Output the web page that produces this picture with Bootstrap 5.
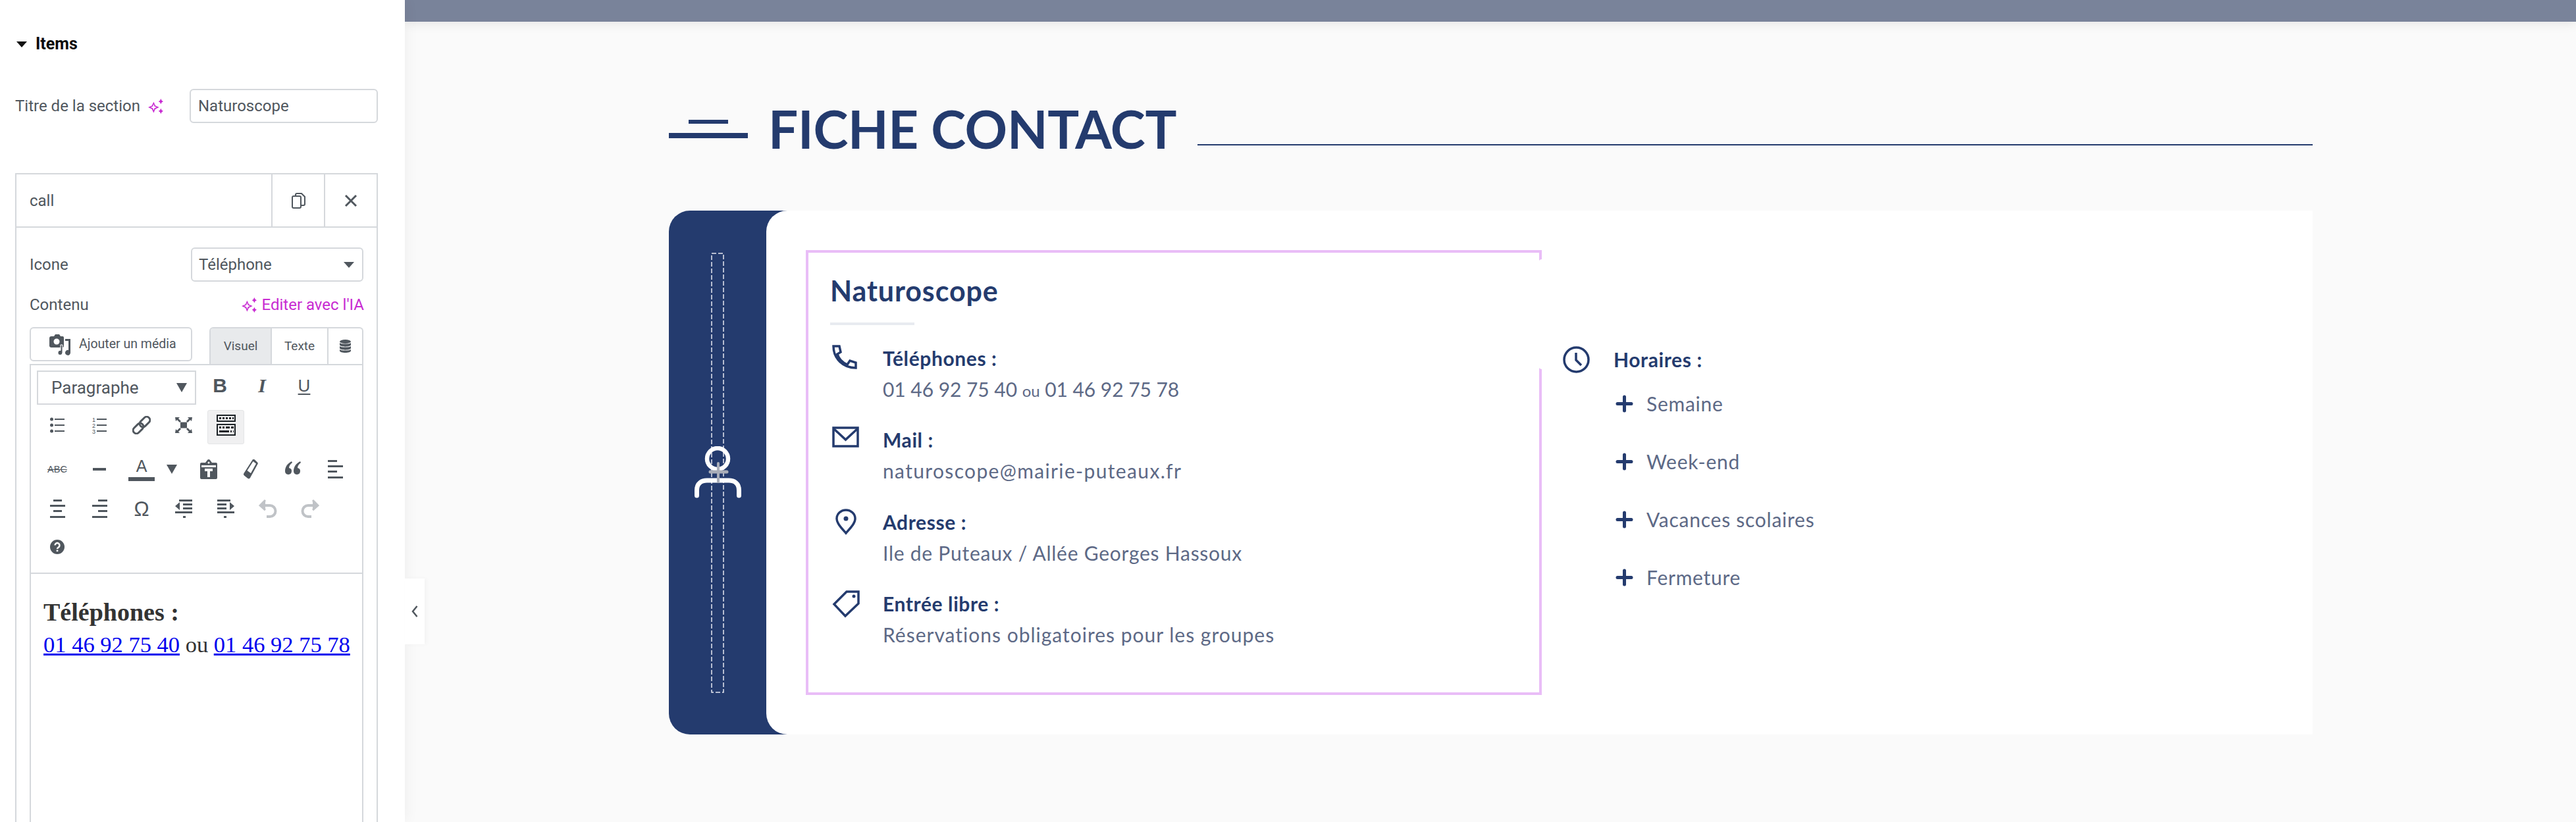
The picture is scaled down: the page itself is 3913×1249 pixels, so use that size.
<!DOCTYPE html>
<html lang="fr">
<head>
<meta charset="UTF-8">
<title>Fiche contact</title>
<link href="https://cdn.jsdelivr.net/npm/bootstrap@5.3.0/dist/css/bootstrap.min.css" rel="stylesheet">
<style>
  html, body { height: 1249px; overflow: hidden; }
  body { background: #fafafa; font-family: "Roboto", "Liberation Sans", sans-serif; color: #50575e; }
  svg { display: block; flex: none; }

  /* left panel */
  .side-panel { width: 615px; height: 1249px; flex: none; background: #fff; padding: 50px 41px 0 23px; overflow: hidden; box-shadow: 0 0 22px rgba(0,0,0,.06); position: relative; z-index: 2; }
  .items-head { height: 34px; color: #0b0b0b; font-size: 25px; font-weight: 700; gap: 13px; padding-left: 2px; }
  .tri-down { width: 0; height: 0; border-left: 8px solid transparent; border-right: 8px solid transparent; border-top: 9px solid #111; }
  .title-row { height: 52px; margin-top: 51px; font-size: 24px; }
  .title-row label { width: 265px; gap: 12px; white-space: nowrap; }
  .side-input { width: 286px; height: 52px; border: 2px solid #d5d8dc; border-radius: 6px; padding: 0 11px; font-size: 24px; color: #50575e; }
  .item-box { height: 1040px; margin-top: 76px; border: 2px solid #d5d8dc; font-size: 24px; }
  .item-top { height: 81px; border-bottom: 2px solid #d5d8dc; }
  .item-top .item-name { padding-left: 20px; }
  .item-top .item-act { width: 80px; height: 100%; border-left: 2px solid #d5d8dc; }
  .item-body { padding: 30px 20px 0; }
  .side-select { width: 262px; height: 52px; border: 2px solid #d5d8dc; border-radius: 6px; padding: 0 10px; font-size: 24px; color: #50575e; background-size: 16px 9px; background-position: right 12px center; background-image: url("data:image/svg+xml,%3csvg xmlns='http://www.w3.org/2000/svg' viewBox='0 0 16 9'%3e%3cpath fill='%2350575e' d='M0 0h16L8 9z'/%3e%3c/svg%3e"); }
  .content-row { height: 30px; margin-top: 20px; }
  .ia-link { color: #c82bd2; gap: 8px; margin-right: -1px; }
  .media-row { margin-top: 19px; }
  .media-btn { width: 247px; height: 52px; border: 2px solid #d5d8dc; border-radius: 6px; font-size: 19.5px; color: #50575e; gap: 12px; padding: 0 0 0 28px; background: #fff; white-space: nowrap; }
  .mode-tabs { width: 234px; height: 56px; border: 2px solid #d5d8dc; border-bottom: 0; border-radius: 6px 6px 0 0; overflow: hidden; font-size: 19px; }
  .mode-tabs > div { height: 100%; }
  .mode-tabs .tab-on { width: 91px; background: #e8eaec; }
  .mode-tabs .tab-off { width: 86px; border-left: 2px solid #d5d8dc; }
  .mode-tabs .tab-db { flex: 1; border-left: 2px solid #d5d8dc; }
  .editor-box { height: 800px; border: 2px solid #d5d8dc; }
  .tool-zone { height: 317px; border-bottom: 2px solid #d5d8dc; padding: 8px 0 0 8px; }
  .tool-row { display: flex; height: 52px; margin-bottom: 8px; }
  .tool-row.r3 { margin-top: 12px; }
  .tool-row.r5 { margin-top: -2px; }
  .para-select { width: 242px; height: 52px; border: 2px solid #d5d8dc; padding: 0 12px 0 20px; font-size: 26px; margin: 0 4px 0 1px; }
  .tool-cell { width: 64px; height: 52px; color: #50575e; }
  .tool-cell.lift { padding-bottom: 6px; }
  .tool-cell.caret-cell { width: 28px; }
  .tool-cell.after-caret { margin-left: 10px; }
  .tool-on { width: 56px; margin: 0 4px; background: #f0f0f1; border: 1px solid #e4e5e7; border-radius: 3px; }
  .tb-b { font: 700 30px/1 "Liberation Sans", sans-serif; }
  .tb-i { font: italic 700 30px/1 "Liberation Serif", serif; }
  .tb-u { font: 400 26px/1 "Liberation Sans", sans-serif; text-decoration: underline; text-underline-offset: 3px; }
  .tb-a { font: 400 25px/1 "Liberation Sans", sans-serif; border-bottom: 6px solid #50575e; width: 40px; text-align: center; padding-bottom: 4px; }
  .tb-abc { font: 400 14.5px/1 "Liberation Sans", sans-serif; text-decoration: line-through; }
  .tb-om { font: 400 31px/1 "Liberation Sans", sans-serif; }
  .tri-small { width: 0; height: 0; border-left: 8px solid transparent; border-right: 8px solid transparent; border-top: 14px solid #50575e; }
  .edit-text { padding: 36px 20px 0 19px; font-family: "Liberation Serif", serif; color: #333; }
  .edit-text h4 { font: 700 38px/44px "Liberation Serif", serif; margin: 0; color: #333; }
  .edit-text p { font-size: 34.5px; line-height: 42px; margin: 6px 0 0; white-space: nowrap; }
  .edit-text a { color: #0000ee; }
  .fold-tab { width: 30px; height: 100px; background: #fff; box-shadow: 3px 0 6px rgba(0,0,0,.03); position: absolute; left: 615px; top: 879px; z-index: 3; }

  /* preview */
  .preview { flex: 1; min-width: 0; font-family: "Lato", "Noto Sans", sans-serif; color: #5d6986; }
  .top-strip { height: 33px; background: #79839a; box-shadow: 0 4px 16px rgba(0,0,0,.08); }
  .preview-wrap { width: 2497px; margin-left: 401px; }
  .head-row { height: 90px; margin-top: 120px; }
  .head-bars { width: 120px; flex: none; margin-right: 31px; padding-top: 29px; }
  .head-bars .bar-a { width: 60px; height: 6px; margin: 0 auto 14px; background: #243b6e; }
  .head-bars .bar-b { height: 8px; background: #243b6e; }
  .head-row h1 { font: 700 80px/90px "Lato", sans-serif; color: #243b6e; margin: -3px 0 0; white-space: nowrap; letter-spacing: -.3px; }
  .head-line { flex: 1; height: 2px; background: #243b6e; margin-left: 32px; margin-top: 66px; }
  .sheet { margin-top: 77px; height: 796px; background: #243b6e; border-radius: 32px 0 0 32px; }
  .sheet-bar { width: 148px; flex: none; position: relative; padding-top: 64px; padding-left: 64px; }
  .drag-person { position: absolute; left: 39px; top: 358px; }
  .sheet-main { flex: 1; background: #fff; border-radius: 32px 0 0 32px; padding: 60px 0 0 60px; }
  .pink-box { width: 1118px; height: 676px; border: 4px solid #e9bdf7; padding: 33px 0 0 33px; position: relative; flex: none; }
  .pink-gap { position: absolute; right: -4px; top: 10px; width: 5px; height: 167px; background: #fff; border-radius: 5px 0 0 5px; }
  .pink-box h3 { font: 700 43px/50px "Lato", sans-serif; color: #243b6e; margin: 0; letter-spacing: .9px; }
  .short-rule { width: 128px; height: 4px; background: #e8ebf0; margin-top: 23px; margin-bottom: 30px; }
  .info-row { height: 124.3px; }
  .info-icon { width: 80px; flex: none; padding-left: 3px; }
  .info-label { font: 700 30px/40px "Lato", sans-serif; color: #243b6e; letter-spacing: .6px; }
  .info-value { font: 400 30px/40px "Lato", sans-serif; margin-top: 7px; letter-spacing: .75px; white-space: nowrap; }
  .info-value small { font-size: 24px; }
  .info-value.tight { letter-spacing: -.05px; }
  .info-value.wide { letter-spacing: 1.35px; }
  .info-value.wider { letter-spacing: 1px; }
  .hours-col { margin-left: 32px; padding-top: 146px; }
  .hours-icon { width: 77px; flex: none; }
  .hours-row { height: 40px; margin-top: 48px; padding-left: 80px; gap: 20px; font-size: 30px; letter-spacing: .75px; }
  .hours-row.first { margin-top: 26px; }
</style>
</head>
<body>
<div class="d-flex">
  <!-- left panel -->
  <div class="side-panel">
    <div class="items-head d-flex align-items-center"><span class="tri-down"></span><span>Items</span></div>

    <div class="title-row d-flex align-items-center">
      <label class="d-flex align-items-center">Titre de la section
        <svg width="23" height="23" viewBox="0 0 22 22" fill="#c82bd2"><path d="M8 4.500 10.500 10 16 12.500 10.500 15 8 20.500 5.500 15 0 12.500 5.500 10Z M8 8 6.800 11.300 3.500 12.500 6.800 13.700 8 17 9.200 13.700 12.500 12.500 9.200 11.300Z" fill-rule="evenodd"/><path d="M18.500 0 19.800 2.700 22 4 19.800 5.300 18.500 8 17.200 5.300 15 4 17.200 2.700Z M18.500 14 19.800 16.700 22 18 19.800 19.300 18.500 22 17.200 19.300 15 18 17.200 16.700Z"/></svg>
      </label>
      <input class="side-input" type="text" value="Naturoscope">
    </div>

    <div class="item-box">
      <div class="item-top d-flex align-items-center">
        <div class="item-name flex-grow-1">call</div>
        <div class="item-act d-flex align-items-center justify-content-center">
          <svg width="21" height="24" viewBox="0 0 21 24" fill="none" stroke="#50575e" stroke-width="2"><path d="M6 5V3a2 2 0 0 1 2-2h7l5 5v11a2 2 0 0 1-2 2h-4"/><rect x="1" y="5" width="13" height="18" rx="2"/></svg>
        </div>
        <div class="item-act d-flex align-items-center justify-content-center">
          <svg width="20" height="20" viewBox="0 0 20 20" stroke="#50575e" stroke-width="3"><path d="M2 2l16 16M18 2 2 18"/></svg>
        </div>
      </div>
      <div class="item-body">
        <div class="d-flex align-items-center justify-content-between">
          <span>Icone</span>
          <select class="form-select side-select"><option>Téléphone</option></select>
        </div>
        <div class="content-row d-flex align-items-center justify-content-between">
          <span>Contenu</span>
          <span class="ia-link d-flex align-items-center">
            <svg width="23" height="23" viewBox="0 0 22 22" fill="#c82bd2"><path d="M8 4.500 10.500 10 16 12.500 10.500 15 8 20.500 5.500 15 0 12.500 5.500 10Z M8 8 6.800 11.300 3.500 12.500 6.800 13.700 8 17 9.200 13.700 12.500 12.500 9.200 11.300Z" fill-rule="evenodd"/><path d="M18.500 0 19.800 2.700 22 4 19.800 5.300 18.500 8 17.200 5.300 15 4 17.200 2.700Z M18.500 14 19.800 16.700 22 18 19.800 19.300 18.500 22 17.200 19.300 15 18 17.200 16.700Z"/></svg>
            Editer avec l'IA
          </span>
        </div>
        <div class="media-row d-flex justify-content-between align-items-start">
          <button class="media-btn d-flex align-items-center" type="button">
            <svg width="33" height="33" viewBox="0 0 33 33" fill="#50575e"><path d="M3 4h4l2-3h6l2 3h3a2 2 0 0 1 2 2v13a2 2 0 0 1-2 2H3a3 3 0 0 1-3-2V7a3 3 0 0 1 3-3Z"/><circle cx="11" cy="12" r="4.500" fill="#fff"/><path d="M24 8h8v21a4 4 0 1 1-3-4V11h-5Z"/><path d="M17 17h3v12a3.500 3.500 0 1 1-3-3.500Z" stroke="#fff" stroke-width="1"/></svg>
            Ajouter un média
          </button>
          <div class="mode-tabs d-flex">
            <div class="tab-on d-flex align-items-center justify-content-center">Visuel</div>
            <div class="tab-off d-flex align-items-center justify-content-center">Texte</div>
            <div class="tab-db d-flex align-items-center justify-content-center">
              <svg width="17" height="20" viewBox="0 0 17 20" fill="#50575e"><ellipse cx="8.500" cy="3" rx="8.500" ry="3"/><path d="M0 5c2 2 15 2 17 0v3c0 3.500-17 3.500-17 0ZM0 10c2 2 15 2 17 0v3c0 3.500-17 3.500-17 0ZM0 15c2 2 15 2 17 0v2c0 4-17 4-17 0Z"/></svg>
            </div>
          </div>
        </div>
        <div class="editor-box">
          <div class="tool-zone">
            <div class="tool-row">
              <div class="para-select d-flex align-items-center justify-content-between"><span>Paragraphe</span><span class="tri-small"></span></div>
              <div class="tool-cell lift d-flex align-items-center justify-content-center"><span class="tb-b">B</span></div>
              <div class="tool-cell lift d-flex align-items-center justify-content-center"><span class="tb-i">I</span></div>
              <div class="tool-cell lift d-flex align-items-center justify-content-center"><span class="tb-u">U</span></div>
            </div>
            <div class="tool-row">
              <div class="tool-cell lift d-flex align-items-center justify-content-center">
                <svg width="22" height="24" viewBox="0 0 22 24" fill="#50575e"><circle cx="2.500" cy="3" r="2.500"/><circle cx="2.500" cy="12" r="2.500"/><circle cx="2.500" cy="21" r="2.500"/><path d="M7 2h15v2H7zM7 11h15v2H7zM7 20h15v2H7z"/></svg>
              </div>
              <div class="tool-cell lift d-flex align-items-center justify-content-center">
                <svg width="22" height="26" viewBox="0 0 22 26" fill="#50575e"><text x="0" y="8" font-size="9" font-family="Liberation Sans">1</text><text x="0" y="17" font-size="9" font-family="Liberation Sans">2</text><text x="0" y="26" font-size="9" font-family="Liberation Sans">3</text><path d="M7 3h15v2H7zM7 12h15v2H7zM7 21h15v2H7z"/></svg>
              </div>
              <div class="tool-cell lift d-flex align-items-center justify-content-center">
                <svg width="28" height="28" viewBox="0 0 28 28" fill="none" stroke="#50575e" stroke-width="3"><g transform="rotate(-45 14 14)"><rect x="-2" y="9" width="18" height="10" rx="5"/><rect x="12" y="9" width="18" height="10" rx="5"/></g></svg>
              </div>
              <div class="tool-cell lift d-flex align-items-center justify-content-center">
                <svg width="26" height="24" viewBox="0 0 26 24" fill="#50575e"><rect x="8" y="7.500" width="10" height="9"/><path d="M0 0h7L5 2l4 4-2 2-4-4-2 2ZM26 0h-7l2 2-4 4 2 2 4-4 2 2ZM0 24h7l-2-2 4-4-2-2-4 4-2-2ZM26 24h-7l2-2-4-4 2-2 4 4 2-2Z"/></svg>
              </div>
              <div class="tool-cell tool-on lift d-flex align-items-center justify-content-center">
                <svg width="29" height="32" viewBox="0 0 29 32"><path fill="#1d2327" d="M0 0h29v11H0zM0 14h29v18H0z"/><path fill="#f0f0f1" d="M2 2h25v7H2zM2 16h25v14H2z"/><path fill="#1d2327" d="M4 4h3v3H4zM9 4h3v3H9zM14 4h3v3h-3zM19 4h3v3h-3zM24 4h2v3h-2zM4 18h3v3H4zM9 18h3v3H9zM14 18h6v3h-6zM22 18h4v3h-4zM4 24h15v3H4zM21 24h2v3h-2zM25 24h1v3h-1z"/></svg>
              </div>
            </div>
            <div class="tool-row r3">
              <div class="tool-cell d-flex align-items-center justify-content-center"><span class="tb-abc">ABC</span></div>
              <div class="tool-cell d-flex align-items-center justify-content-center"><svg width="20" height="4"><rect width="20" height="4" fill="#50575e"/></svg></div>
              <div class="tool-cell d-flex align-items-center justify-content-center"><span class="tb-a">A</span></div>
              <div class="tool-cell caret-cell d-flex align-items-center justify-content-center"><span class="tri-small"></span></div>
              <div class="tool-cell after-caret d-flex align-items-center justify-content-center">
                <svg width="26" height="30" viewBox="0 0 26 30" fill="#50575e"><path d="M2 5h6l3-4a2.500 2.500 0 0 1 4 0l3 4h6a2 2 0 0 1 2 2v21a2 2 0 0 1-2 2H2a2 2 0 0 1-2-2V7a2 2 0 0 1 2-2Z"/><circle cx="13" cy="5" r="1.500" fill="#fff"/><path fill="#fff" d="M2 9h22v3H2zM7 14h12v4h-4v9h-4v-9H7z"/></svg>
              </div>
              <div class="tool-cell d-flex align-items-center justify-content-center">
                <svg width="22" height="30" viewBox="0 0 22 30"><path fill="#50575e" d="M14 0a3 3 0 0 1 3 .5l4 4a2 2 0 0 1 .500 2.500L10 28a2.500 2.500 0 0 1-3.500 1l-5-4A3 3 0 0 1 .500 21Z"/><path fill="#fff" d="M14.500 3 19 6.500 11 21 5.500 17Z"/></svg>
              </div>
              <div class="tool-cell d-flex align-items-center justify-content-center">
                <svg width="24" height="24" viewBox="0 0 24 24" fill="#50575e"><path d="M10 0C4 3 0 8 0 15a5 5 0 1 0 6-5c0-3 2-6 5-8ZM23 0c-6 3-10 8-10 15a5 5 0 1 0 6-5c0-3 2-6 5-8Z"/></svg>
              </div>
              <div class="tool-cell d-flex align-items-center justify-content-center">
                <svg width="23" height="28" viewBox="0 0 23 28" fill="#50575e"><path d="M0 0h14v3H0zM0 8h23v3H0zM0 16h14v3H0zM0 25h23v3H0z"/></svg>
              </div>
            </div>
            <div class="tool-row">
              <div class="tool-cell d-flex align-items-center justify-content-center">
                <svg width="23" height="28" viewBox="0 0 23 28" fill="#50575e"><path d="M5 0h13v3H5zM0 8h23v3H0zM5 16h13v3H5zM0 25h23v3H0z"/></svg>
              </div>
              <div class="tool-cell d-flex align-items-center justify-content-center">
                <svg width="23" height="28" viewBox="0 0 23 28" fill="#50575e"><path d="M9 0h14v3H9zM0 8h23v3H0zM9 16h14v3H9zM0 25h23v3H0z"/></svg>
              </div>
              <div class="tool-cell d-flex align-items-center justify-content-center"><span class="tb-om">Ω</span></div>
              <div class="tool-cell d-flex align-items-center justify-content-center">
                <svg width="26" height="28" viewBox="0 0 26 28" fill="#50575e"><path d="M6 0h20v3H6zM12 6h14v3H12zM12 12h14v3H12zM0 18h26v3H0zM12 25h4v3h-4zM0 10l7-6v12z"/></svg>
              </div>
              <div class="tool-cell d-flex align-items-center justify-content-center">
                <svg width="26" height="28" viewBox="0 0 26 28" fill="#50575e"><path d="M0 0h20v3H0zM0 6h14v3H0zM0 12h14v3H0zM0 18h26v3H0zM10 25h4v3h-4zM26 10l-7-6v12z"/></svg>
              </div>
              <div class="tool-cell d-flex align-items-center justify-content-center">
                <svg width="28" height="28" viewBox="0 0 28 28" fill="none" stroke="#c0c3c7" stroke-width="4"><path d="M8 9h9a8.500 8.500 0 0 1 0 17h-5"/><path d="M10 1 2 9l8 7" stroke-width="3" fill="#c0c3c7"/></svg>
              </div>
              <div class="tool-cell d-flex align-items-center justify-content-center">
                <svg width="28" height="28" viewBox="0 0 28 28" fill="none" stroke="#c0c3c7" stroke-width="4"><path d="M20 9h-9a8.500 8.500 0 0 0 0 17h5"/><path d="M18 1l8 8-8 7" stroke-width="3" fill="#c0c3c7"/></svg>
              </div>
            </div>
            <div class="tool-row r5">
              <div class="tool-cell d-flex align-items-center justify-content-center">
                <svg width="22" height="22" viewBox="0 0 22 22"><circle cx="11" cy="11" r="11" fill="#50575e"/><path d="M7.500 8.500a3.500 3.500 0 1 1 5.500 3c-1.300 1-2 1.300-2 2.500" fill="none" stroke="#fff" stroke-width="2.500"/><rect x="9.700" y="15.500" width="2.600" height="2.600" fill="#fff"/></svg>
              </div>
            </div>
          </div>
          <div class="edit-text">
            <h4>Téléphones :</h4>
            <p><a href="#">01 46 92 75 40</a> ou <a href="#">01 46 92 75 78</a></p>
          </div>
        </div>
      </div>
    </div>
  </div>

  <div class="fold-tab d-flex align-items-center justify-content-center">
    <svg width="10" height="18" viewBox="0 0 10 18" fill="none" stroke="#50575e" stroke-width="2.500"><path d="M8.500 1 2 9l6.500 8"/></svg>
  </div>

  <!-- preview -->
  <div class="preview">
    <div class="top-strip"></div>
    <div class="preview-wrap">
      <div class="head-row d-flex align-items-start">
        <div class="head-bars"><div class="bar-a"></div><div class="bar-b"></div></div>
        <h1>FICHE CONTACT</h1>
        <div class="head-line"></div>
      </div>

      <div class="sheet d-flex">
        <div class="sheet-bar">
          <svg width="20" height="669" viewBox="0 0 20 669" fill="none"><rect x="1" y="1" width="18" height="667" stroke="#e6e9f1" stroke-width="1.500" stroke-dasharray="7 3"/></svg>
          <svg class="drag-person" width="71" height="80" viewBox="0 0 71 80" fill="none">
            <circle cx="35" cy="19" r="16" stroke="#fff" stroke-width="6.500"/>
            <path d="M3.500 75V67C3.500 56 11 52 19 52H52C60 52 67.500 56 67.500 67V75" stroke="#fff" stroke-width="7" stroke-linecap="round"/>
            <path d="M24 39H49" stroke="#a9adb8" stroke-width="5" stroke-linecap="round"/>
            <path d="M36 26V54" stroke="#a9adb8" stroke-width="4" stroke-linecap="round"/>
          </svg>
        </div>
        <div class="sheet-main d-flex align-items-start">
          <div class="pink-box">
            <div class="pink-gap"></div>
            <h3>Naturoscope</h3>
            <div class="short-rule"></div>
            <div class="info-row d-flex">
              <div class="info-icon">
                <svg width="38" height="37" viewBox="0 0 38 37" fill="none" stroke="#243b6e" stroke-width="3.500"><path d="M2 2h9l2 9-5 3c2 7 8 13 15 16l4-6 9 3v8C17 35 2 21 2 2Z"/></svg>
              </div>
              <div><div class="info-label">Téléphones :</div><div class="info-value tight">01 46 92 75 40 <small>ou</small> 01 46 92 75 78</div></div>
            </div>
            <div class="info-row d-flex">
              <div class="info-icon">
                <svg width="41" height="32" viewBox="0 0 41 32" fill="none" stroke="#243b6e" stroke-width="3.500"><rect x="2" y="2" width="37" height="28"/><path d="M2 3l18.500 17L39 3"/></svg>
              </div>
              <div><div class="info-label">Mail :</div><div class="info-value wide">naturoscope@mairie-puteaux.fr</div></div>
            </div>
            <div class="info-row d-flex">
              <div class="info-icon" style="padding-left:8px">
                <svg width="32" height="40" viewBox="0 0 32 40" fill="none" stroke="#243b6e" stroke-width="3.500"><path d="M16 37C9 29 2 22 2 15a14 13 0 0 1 28 0c0 7-7 14-14 22Z"/><circle cx="16" cy="15" r="3.500" fill="#243b6e" stroke="none"/></svg>
              </div>
              <div><div class="info-label">Adresse :</div><div class="info-value">Ile de Puteaux / Allée Georges Hassoux</div></div>
            </div>
            <div class="info-row d-flex">
              <div class="info-icon">
                <svg width="42" height="42" viewBox="0 0 42 42" fill="none" stroke="#243b6e" stroke-width="3.500"><path d="M22 2h18v18L20 39 3 21Z"/><circle cx="33" cy="9" r="2.500" fill="#243b6e" stroke="none"/></svg>
              </div>
              <div><div class="info-label">Entrée libre :</div><div class="info-value wider">Réservations obligatoires pour les groupes</div></div>
            </div>
          </div>

          <div class="hours-col">
            <div class="d-flex">
              <div class="hours-icon">
                <svg width="41" height="41" viewBox="0 0 41 41" fill="none" stroke="#243b6e" stroke-width="3.500"><circle cx="20.500" cy="20.500" r="18.500"/><path d="M20 10v11l8 8"/></svg>
              </div>
              <div class="info-label">Horaires :</div>
            </div>
            <div class="hours-row first d-flex align-items-center"><svg width="27" height="27" viewBox="0 0 27 27" stroke="#243b6e" stroke-width="5" stroke-linecap="round"><path d="M13.500 3v21M3 13.500h21"/></svg>Semaine</div>
            <div class="hours-row d-flex align-items-center"><svg width="27" height="27" viewBox="0 0 27 27" stroke="#243b6e" stroke-width="5" stroke-linecap="round"><path d="M13.500 3v21M3 13.500h21"/></svg>Week-end</div>
            <div class="hours-row d-flex align-items-center"><svg width="27" height="27" viewBox="0 0 27 27" stroke="#243b6e" stroke-width="5" stroke-linecap="round"><path d="M13.500 3v21M3 13.500h21"/></svg>Vacances scolaires</div>
            <div class="hours-row d-flex align-items-center"><svg width="27" height="27" viewBox="0 0 27 27" stroke="#243b6e" stroke-width="5" stroke-linecap="round"><path d="M13.500 3v21M3 13.500h21"/></svg>Fermeture</div>
          </div>
        </div>
      </div>
    </div>
  </div>
</div>
<script src="https://cdn.jsdelivr.net/npm/bootstrap@5.3.0/dist/js/bootstrap.bundle.min.js"></script>
</body>
</html>
